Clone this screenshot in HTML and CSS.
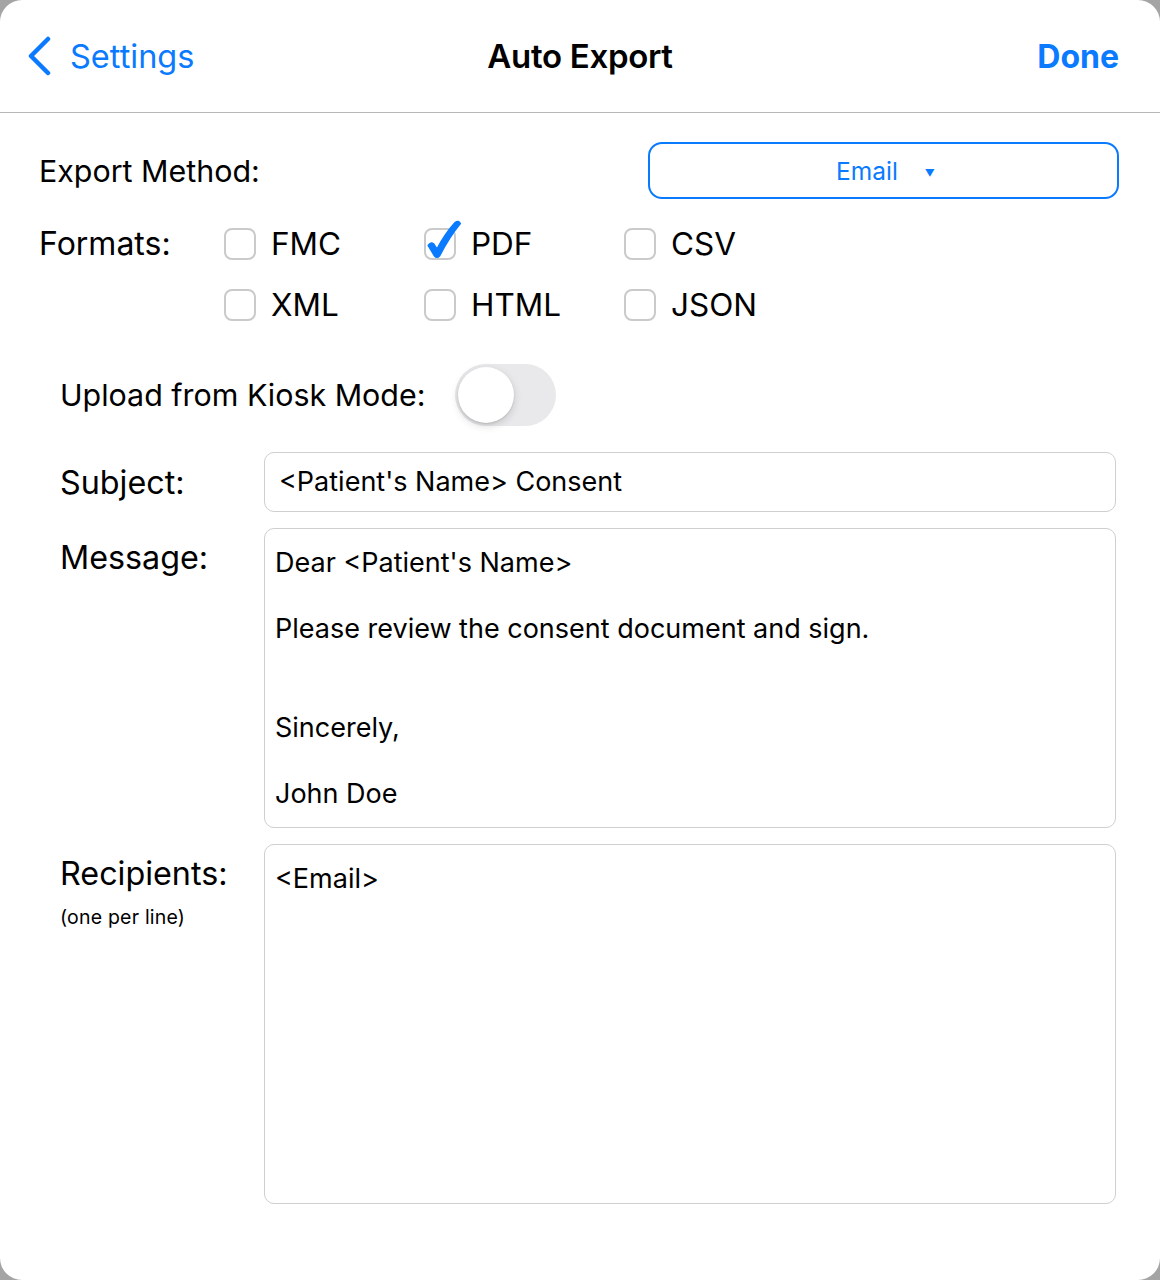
FILE: index.html
```html
<!DOCTYPE html>
<html lang="en">

    <head>
        <meta charset="UTF-8">
        <meta name="viewport" content="width=device-width, initial-scale=1.0">
        <title>Auto Export</title>
        <link rel="stylesheet" href="styles.css">
    </head>

    <body>
        <div class="sheet">
            <!-- Barra de navegação -->
            <header class="navbar">
                <a class="nav-back" href="#">
                    <svg class="chevron" width="28" height="40" viewBox="0 0 28 40">
                        <path d="M21 3 L4 20 L21 37" fill="none" stroke="#0a7aff" stroke-width="4.5"
                            stroke-linecap="round" stroke-linejoin="round"></path>
                    </svg>
                    <span>Settings</span>
                </a>
                <div class="nav-title">Auto Export</div>
                <a class="nav-done" href="#">Done</a>
            </header>

            <main class="content">
                <div class="row-method">
                    <span class="label-lg">Export Method:</span>
                    <button class="method-btn">Email <span class="caret">▼</span></button>
                </div>

                <div class="row-formats">
                    <span class="label-fmt">Formats:</span>
                    <div class="formats-grid">
                        <label class="fmt"><span class="box"></span>FMC</label>
                        <label class="fmt"><span class="box checked">
                                <svg class="tick" width="40" height="44" viewBox="0 0 40 44">
                                    <path d="M4.5 29.5 Q6.5 26 9.5 28 L13 33.5 Q21 18 31.5 6.5 Q34.5 4.5 36 7.5
                                        Q25.5 20 15.5 39.5 Q13 42.5 10.5 39.5 Z" fill="#0a7aff" stroke="#0a7aff"
                                        stroke-width="2" stroke-linejoin="round"></path>
                                </svg>
                            </span>PDF</label>
                        <label class="fmt"><span class="box"></span>CSV</label>
                        <label class="fmt"><span class="box"></span>XML</label>
                        <label class="fmt"><span class="box"></span>HTML</label>
                        <label class="fmt"><span class="box"></span>JSON</label>
                    </div>
                </div>

                <div class="row-kiosk">
                    <span class="label-lg">Upload from Kiosk Mode:</span>
                    <span class="toggle"><span class="knob"></span></span>
                </div>

                <div class="field">
                    <div class="field-label">
                        <span class="label-xl">Subject:</span>
                    </div>
                    <div class="input subject">&lt;Patient's Name&gt; Consent</div>
                </div>

                <div class="field">
                    <div class="field-label top">
                        <span class="label-xl">Message:</span>
                    </div>
                    <div class="input area message">Dear &lt;Patient's Name&gt;

Please review the consent document and sign.


Sincerely,

John Doe</div>
                </div>

                <div class="field">
                    <div class="field-label top">
                        <span class="label-xl">Recipients:</span>
                        <span class="hint">(one per line)</span>
                    </div>
                    <div class="input area recipients">&lt;Email&gt;</div>
                </div>
            </main>
        </div>
    </body>

</html>
```

FILE: styles.css
```css
body {
    margin: 0;
    background: #a4a4a4;
    font-family: Inter, "Noto Sans", sans-serif;
    color: #000;
}

.sheet {
    background: #fff;
    min-height: 1280px;
    border-radius: 22px;
}

/* Barra superior */
.navbar {
    height: 112px;
    border-bottom: 1px solid #b7b7b7;
    display: grid;
    grid-template-columns: 1fr auto 1fr;
    align-items: center;
    padding: 0 41px;
}

.nav-back {
    display: flex;
    align-items: center;
    gap: 15px;
    margin-left: -14px;
    color: #0a7aff;
    text-decoration: none;
    font-size: 32.5px;
}

.nav-title {
    font-size: 33px;
    font-weight: 600;
    letter-spacing: -0.3px;
}

.nav-done {
    justify-self: end;
    color: #0a7aff;
    text-decoration: none;
    font-size: 32px;
    font-weight: 700;
}

.content {
    padding: 29px 44px 0 39px;
}

.label-lg {
    font-size: 30.4px;
}

.label-fmt {
    font-size: 32px;
}

.label-xl {
    font-size: 32.3px;
}

/* Método de exportação */
.row-method {
    display: flex;
    align-items: center;
    justify-content: space-between;
    margin-right: -3px;
}

.method-btn {
    width: 471px;
    height: 57px;
    border: 2px solid #0a7aff;
    border-radius: 14px;
    background: #fff;
    color: #0a7aff;
    font-family: inherit;
    font-size: 24.5px;
    padding: 0 0 0 4px;
}

.caret {
    font-size: 10px;
    margin-left: 20px;
    vertical-align: middle;
}

/* Formatos */
.row-formats {
    display: flex;
    margin-top: 14px;
}

.row-formats .label-fmt {
    width: 185px;
    line-height: 58px;
    padding-top: 2px;
}

.formats-grid {
    display: grid;
    grid-template-columns: repeat(3, 200px);
    grid-auto-rows: 61px;
}

.fmt {
    display: flex;
    align-items: center;
    gap: 15px;
    font-size: 31.5px;
}

.box {
    position: relative;
    width: 28px;
    height: 28px;
    border: 2px solid #cacaca;
    border-radius: 8px;
}

.tick {
    position: absolute;
    left: -2px;
    top: -14px;
}

/* Modo quiosque */
.row-kiosk {
    display: flex;
    align-items: center;
    gap: 30px;
    margin-top: 29px;
    padding-left: 21px;
}

.toggle {
    position: relative;
    width: 101px;
    height: 62px;
    border-radius: 31px;
    background: #e9e9eb;
}

.knob {
    position: absolute;
    left: 3px;
    top: 3px;
    width: 56px;
    height: 56px;
    border-radius: 50%;
    background: #fff;
    box-shadow: 0 3px 8px rgba(0, 0, 0, 0.15), 0 1px 2px rgba(0, 0, 0, 0.12);
}

/* Campos de texto */
.field {
    display: flex;
    margin-top: 16px;
    padding-left: 21px;
}

.row-kiosk + .field {
    margin-top: 26px;
}

.field-label {
    width: 204px;
    flex-shrink: 0;
    display: flex;
    flex-direction: column;
    justify-content: center;
}

.field-label.top {
    justify-content: flex-start;
    padding-top: 10px;
}

.hint {
    font-size: 19.5px;
    margin-top: 12px;
    letter-spacing: 0.2px;
}

.input {
    flex: 1;
    border: 1px solid #cfcfcf;
    border-radius: 10px;
    font-size: 27px;
}

.subject {
    height: 58px;
    line-height: 58px;
    padding-left: 14px;
}

.area {
    white-space: pre-wrap;
    line-height: 33px;
    padding: 17px 10px 0;
}

.message {
    height: 281px;
}

.recipients {
    height: 341px;
}
```
